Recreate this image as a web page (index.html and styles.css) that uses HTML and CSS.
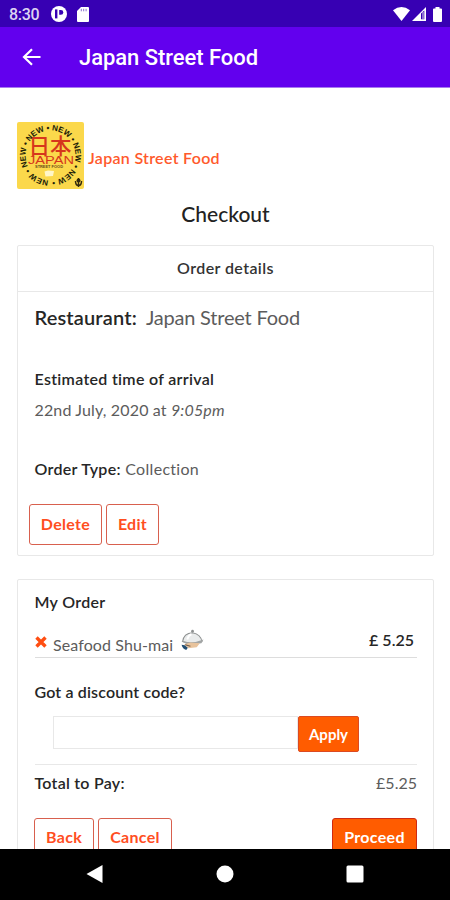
FILE: index.html
```html
<!DOCTYPE html>
<html lang="en">
<head>
<meta charset="utf-8">
<title>Japan Street Food</title>
<link rel="stylesheet" href="styles.css">
</head>
<body>
<div class="phone">
  <div class="status">
    <span class="clock">8:30</span>
    <svg class="st-app" width="16" height="16" viewBox="0 0 16 16"><circle cx="8" cy="8" r="8" fill="#fff"/><path d="M5.200 3.400V12.400" stroke="#3700b3" stroke-width="2.400"/><path d="M8.200 4h1.700a2.300 2.300 0 0 1 0 4.800H8.200z" fill="#3700b3"/></svg>
    <svg class="st-sd" width="12" height="15" viewBox="0 0 12 15"><path d="M4 0h7q1 0 1 1v13q0 1-1 1H1q-1 0-1-1V4z" fill="#fff"/><path d="M4.300 1.800v2.500M6.700 1.800v2.500M9.100 1.800v2.500" stroke="#8b70cf" stroke-width="1"/></svg>
    <div class="spacer"></div>
    <svg class="st-wifi" width="17" height="14" viewBox="0 0 17 14"><path d="M0 3.200Q8.500-3.200 17 3.200L8.500 14z" fill="#fff"/></svg>
    <svg class="st-cell" width="14" height="14" viewBox="0 0 14 14"><path d="M0 14L14 0V14z" fill="#fff"/><path d="M9 6.500L12.300 3.400V12.300H9z" fill="#3700b3"/><path d="M11 5v7" stroke="#c9bcea" stroke-width="1.200"/></svg>
    <svg class="st-bat" width="9" height="15" viewBox="0 0 9 15"><path d="M2.500 0h4v1.500H8q1 0 1 1V14q0 1-1 1H1q-1 0-1-1V2.500q0-1 1-1h1.500z" fill="#fff"/></svg>
  </div>
  <header class="appbar">
    <svg class="arrow" width="20" height="18" viewBox="0 0 20 18"><path d="M18.500 9H2M10 1.200L2 9l8 7.800" fill="none" stroke="#fff" stroke-width="2.200"/></svg>
    <h1 class="title">Japan Street Food</h1>
  </header>
  <main class="page">
    <div class="brand">
      <svg class="logo" width="67" height="67" viewBox="0 0 67 67">
        <defs><path id="ring" d="M33.500 58.500a25 25 0 1 1 .02 0"/></defs>
        <rect width="67" height="67" rx="2" fill="#fbd84b"/>
        <text class="ring-text"><textPath href="#ring" startOffset="2" textLength="153">NEW • NEW • NEW • NEW • NEW • NEW •</textPath></text>
        <text class="kanji" x="33" y="32" text-anchor="middle">日本</text>
        <text class="jp" x="34" y="42" textLength="46" lengthAdjust="spacingAndGlyphs" text-anchor="middle">JAPAN</text>
        <text class="tiny" x="32" y="46" textLength="28" lengthAdjust="spacingAndGlyphs" text-anchor="middle">STREET FOOD</text>
        <path d="M27.500 49.500l3.500-1 6 .5-1 5-7.500.5z" fill="#fff6c8"/>
        <path d="M61.500 56v9M58.500 59q0 4.500 3 4.500t3-4.500" fill="none" stroke="#33290d" stroke-width="1.500"/><circle cx="61.500" cy="58.500" r="2" fill="#33290d"/>
      </svg>
      <span class="brand-name">Japan Street Food</span>
    </div>
    <h2 class="heading"><span>Checkout</span></h2>
    <section class="card details">
      <div class="card-head"><span>Order details</span></div>
      <div class="restaurant"><b class="r-label">Restaurant:</b><span class="r-name">Japan Street Food</span></div>
      <div class="row eta"><b>Estimated time of arrival</b></div>
      <div class="row date"><span>22nd July, 2020 at <i>9:05pm</i></span></div>
      <div class="row type"><b>Order Type:</b> <span>Collection</span></div>
      <div class="buttons"><button class="btn delete">Delete</button><button class="btn edit">Edit</button></div>
    </section>
    <section class="card order">
      <div class="row mine"><b>My Order</b></div>
      <div class="item">
        <svg class="cross" width="12" height="12" viewBox="0 0 12 12"><path d="M1.500 1.500l9 9M10.500 1.500L1.500 10.500" stroke="#ff4e12" stroke-width="3.400"/></svg>
        <span class="item-name">Seafood Shu-mai</span>
        <svg class="cloche" width="24" height="22" viewBox="0 0 23 21"><path d="M2.500 12q1-8 9.500-8.500Q20 5 21 12L12 14z" fill="#e9ebeb" stroke="#8d9090" stroke-width="1"/><path d="M7 10q1-4 4-5" stroke="#fff" stroke-width="1.800" fill="none"/><circle cx="12" cy="2" r="1.300" fill="#8d9090"/><path d="M1 11.500q11 3 21.500-1.500l-2 3.500-13 1.500z" fill="#a2a5a5"/><path d="M4 14.500l6-1.500 9 .5-3 4-8 1z" fill="#e8c39c"/><path d="M5 15l5 1.500" stroke="#6d5846"/><path d="M1.500 15l3 .5 3 2.500-1.500 2q-3.500-1-4.500-5z" fill="#214d72"/></svg>
        <b class="price">£ 5.25</b>
      </div>
      <div class="row discount"><b>Got a discount code?</b></div>
      <div class="coupon"><input class="code" type="text" aria-label="Discount code"><button class="btn solid apply">Apply</button></div>
      <div class="total"><b>Total to Pay:</b><span>£5.25</span></div>
      <div class="actions"><button class="btn back">Back</button><button class="btn cancel">Cancel</button><div class="spacer"></div><button class="btn solid proceed">Proceed</button></div>
    </section>
  </main>
  <nav class="nav">
    <svg width="17" height="18" viewBox="0 0 17 18"><path d="M.5 9L16.500 0V18z" fill="#fff"/></svg>
    <svg width="18" height="18" viewBox="0 0 18 18"><circle cx="9" cy="9" r="8.500" fill="#fff"/></svg>
    <svg width="18" height="18" viewBox="0 0 18 18"><rect x=".5" y=".5" width="17" height="17" rx="1.500" fill="#fff"/></svg>
  </nav>
</div>
</body>
</html>
```
FILE: styles.css
```css
* { box-sizing: border-box; }
body { margin: 0; background: #fff; font-family: Lato, sans-serif; color: #5c5c5c; font-variant-ligatures: none; }
.phone { width: 450px; height: 900px; display: flex; flex-direction: column; overflow: hidden; }
svg { flex: none; display: block; }
.spacer { flex: 1; }
b { font-weight: 600; color: #262626; }

.status { height: 27px; flex: none; background: #3700b3; display: flex; align-items: center; padding: 1px 8px 0 9px; }
.clock { font: 500 16px/26px Roboto, sans-serif; letter-spacing: -0.3px; color: #dcd3f2; width: 42px; padding-top: 1px; }
.st-sd { margin-left: 10px; }
.st-cell { margin: 0 7px 0 2px; }

.appbar { height: 61px; flex: none; background: #6200ee; border-bottom: 1px solid #a77bef; display: flex; align-items: center; padding-left: 22px; }
.title { margin: 0 0 0 37px; font: 500 22px/30px Roboto, sans-serif; letter-spacing: -0.05px; color: #fff; padding-top: 2px; }

.page { height: 761px; flex: none; overflow: hidden; padding: 34px 16px 0 17px; }
.brand { display: flex; height: 67px; align-items: center; gap: 4px; }
.brand-name { font-size: 16px; font-weight: 600; letter-spacing: 0.3px; color: #ff5a2c; line-height: 20px; padding-top: 5px; }
.ring-text { font: 700 8px "Liberation Sans", sans-serif; fill: #201c08; }
.kanji { font: 500 21.5px "Noto Sans CJK JP", sans-serif; fill: #d6361c; }
.jp { font: 400 11px "Liberation Sans", sans-serif; fill: #d6361c; }
.tiny { font: 700 4px "Liberation Sans", sans-serif; fill: #6a4a18; }
.heading { margin: 12px 0 0; height: 26px; font-size: 21px; font-weight: 500; line-height: 26px; color: #222; text-align: center; }

.card { border: 1px solid #e8e8e8; border-radius: 2px; }
.details { margin-top: 18px; height: 311px; }
.card-head { height: 46px; border-bottom: 1px solid #e8e8e8; text-align: center; font-size: 16px; font-weight: 600; letter-spacing: 0.4px; line-height: 44px; color: #333; }
.restaurant { margin: 11px 0 0 16.5px; height: 28px; display: flex; gap: 9px; font-size: 20px; line-height: 28px; white-space: nowrap; }
.r-label { letter-spacing: 0.15px; }
.r-name { letter-spacing: -0.2px; }
.row { height: 20px; margin-left: 16.5px; font-size: 16px; line-height: 20px; white-space: nowrap; letter-spacing: 0.3px; }
.eta { margin-top: 38px; }
.date { margin-top: 11px; letter-spacing: 0.15px; }
.type { margin-top: 39px; }
.buttons { display: flex; gap: 4px; margin: 25px 0 0 11px; }
.btn { height: 41px; padding: 0 0 2px; border: 1px solid #d8604e; border-radius: 3px; background: #fff; color: #ff4e1f; font: 700 16px/20px Lato, sans-serif; letter-spacing: 0.3px; text-align: center; }
.delete { width: 73px; }
.edit { width: 53px; }

.order { margin-top: 23px; height: 300px; padding: 12px 16px 0; }
.order .row { margin-left: 0.5px; }
.item { display: flex; height: 22px; margin: 24px 0 0 1px; border-bottom: 1px solid #ddd; }
.item-name { font-size: 16px; line-height: 18px; margin-left: 6px; letter-spacing: 0.1px; }
.cloche { margin: -7px 0 0 7px; }
.price { margin-left: auto; margin-right: 3px; font-size: 16px; line-height: 8px; }
.order .discount { margin-top: 24px; letter-spacing: 0.15px; }
.coupon { display: flex; margin: 14px 0 0 19px; }
.code { width: 245px; height: 33px; border: 1px solid #e8e8e8; padding: 0 8px; font: 16px Lato, sans-serif; }
.solid { background: #ff5c00; border-color: #dc4a21; color: #fff; }
.apply { width: 61px; height: 36px; border-radius: 2px; font-size: 15px; padding-bottom: 1px; letter-spacing: 0; }
.total { display: flex; justify-content: space-between; height: 38px; margin-top: 12px; margin-left: 0.5px; border-top: 1px solid #e8e8e8; font-size: 16px; line-height: 35px; }
.total b { letter-spacing: 0.25px; }
.actions { display: flex; gap: 4px; margin: 16px 0 0; }
.actions .btn { padding-bottom: 3px; }
.back { width: 60px; }
.cancel { width: 74px; }
.proceed { width: 85px; border-color: #cf2a12; }

.nav { height: 51px; flex: none; background: #000; display: flex; justify-content: space-between; align-items: center; padding: 0 86px 1px; }
```
